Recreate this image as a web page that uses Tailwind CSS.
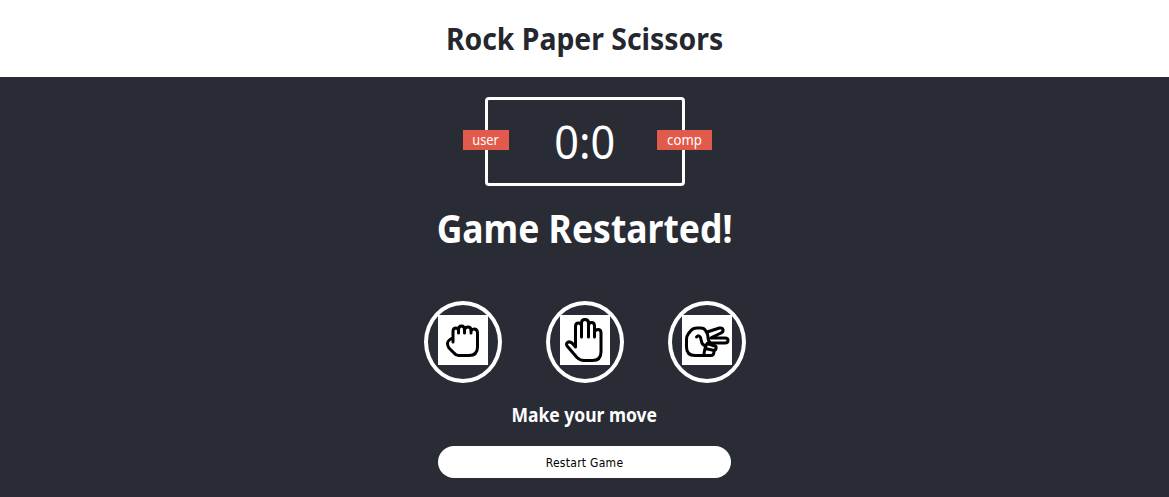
<!DOCTYPE html>
<html lang="en">
<head>
<meta charset="utf-8">
<title>Rock Paper Scissors</title>
<script src="https://cdn.jsdelivr.net/npm/@tailwindcss/browser@4"></script>
</head>
<body class="h-[497px] overflow-hidden bg-[#2a2c35] font-['Noto_Sans',sans-serif] text-white">
<header class="flex h-[77px] items-center justify-center bg-white">
  <h1 class="origin-center scale-x-[0.915] whitespace-nowrap text-[31px] font-bold leading-[77px] text-[#25272e]">Rock Paper Scissors</h1>
</header>
<main class="flex flex-col items-center">
  <div class="relative mt-5 flex h-[89px] w-[200px] items-center justify-center rounded-[4px] border-3 border-white">
    <div class="absolute -left-[25px] top-[30px] flex h-5 w-[46px] items-center justify-center bg-[#e25a4b] pb-px text-[14px]"><span class="scale-x-[0.91]">user</span></div>
    <div class="absolute -right-[30px] top-[30px] flex h-5 w-[55px] items-center justify-center bg-[#e25a4b] pb-px text-[14px]"><span class="scale-x-[0.94]">comp</span></div>
    <p class="scale-x-[0.96] text-[45px] leading-[83px]"><span>0</span><span>:</span><span>0</span></p>
  </div>
  <p class="mt-[12px] h-[60px] scale-x-[0.91] whitespace-nowrap text-[39px] font-bold leading-[60px]">Game Restarted!</p>
  <div class="mt-[43px] flex gap-11">
    <div class="h-[82px] w-[78px] rounded-[50%] border-4 border-white p-[10px]">
      <svg class="size-[50px] bg-white" viewBox="0 0 50 50" fill="none" stroke="#000" stroke-width="3" stroke-linecap="round" stroke-linejoin="round">
        <path d="M15 27V16.500Q15 13 18 13Q20.500 13 20.500 16V18M20.500 15Q20.500 11 23.500 11Q26.500 11 26.500 15V18M26.500 15Q27 12 30 12Q33 12 33 15.500V18M33 16Q34 14 36 14Q39.500 14 39.500 18V32Q39.500 40.500 31 40.500H20.500Q18 40.500 16 38L11 33Q9.500 31 9.500 28.500Q9.500 25.500 14.500 23"/>
      </svg>
    </div>
    <div class="h-[82px] w-[78px] rounded-[50%] border-4 border-white p-[10px]">
      <svg class="size-[50px] bg-white" viewBox="0 0 50 50" fill="none" stroke="#000" stroke-width="3" stroke-linecap="round" stroke-linejoin="round">
        <path d="M15.500 32V11.500Q15.500 8 18.500 8Q21.500 8 21.500 11.500V22M21.500 11V8Q21.500 4.500 25 4.500Q28.500 4.500 28.500 8V22M28.500 11Q28.500 7.500 31.500 7.500Q34.500 7.500 34.500 11V22M34.500 17Q35.500 14.500 38 14.500Q41 14.500 41 18V37Q41 45.500 32.500 45.500H24Q20 45.500 17 42.500L7.500 31.500Q5.500 29 7.500 27.500Q9.500 26 12 28L15.500 32"/>
      </svg>
    </div>
    <div class="h-[82px] w-[78px] rounded-[50%] border-4 border-white p-[10px]">
      <svg class="size-[50px] bg-white" viewBox="0 0 50 50" fill="none" stroke="#000" stroke-width="3" stroke-linecap="round" stroke-linejoin="round">
        <path d="M23 40.500H13Q4.500 40.500 4.500 32V24.500Q4.500 21 6.500 18.500L9 15.500Q11 13 15 13H19Q22 13 23.500 15.500L25.500 19L26.500 25.500L29 28.500M25 17L37.500 13Q40.500 12.500 41 14.500Q41.500 17 39 18L29.500 22.500M29 23H43Q46 23 46 25.500Q46 28 43 28H28M14.500 22Q17 19.500 18.500 22.500L19.500 26.500Q20 29.500 22.500 30.500M25 28.500L34 31.500Q34.500 34.500 32.500 35.500L23 33.500ZM23 33.500L22 38.500Q22 40 23.500 40.500L29 40.500Q32 40.500 32 36"/>
      </svg>
    </div>
  </div>
  <p class="mt-[16px] h-8 scale-x-[0.875] whitespace-nowrap text-[20px] font-bold leading-8">Make your move</p>
  <button class="mt-[15px] h-8 w-[293px] rounded-full bg-white pt-px font-['DejaVu_Sans_Condensed','DejaVu_Sans',sans-serif] text-[12px] tracking-[0.28px] text-black">Restart Game</button>
</main>
</body>
</html>
